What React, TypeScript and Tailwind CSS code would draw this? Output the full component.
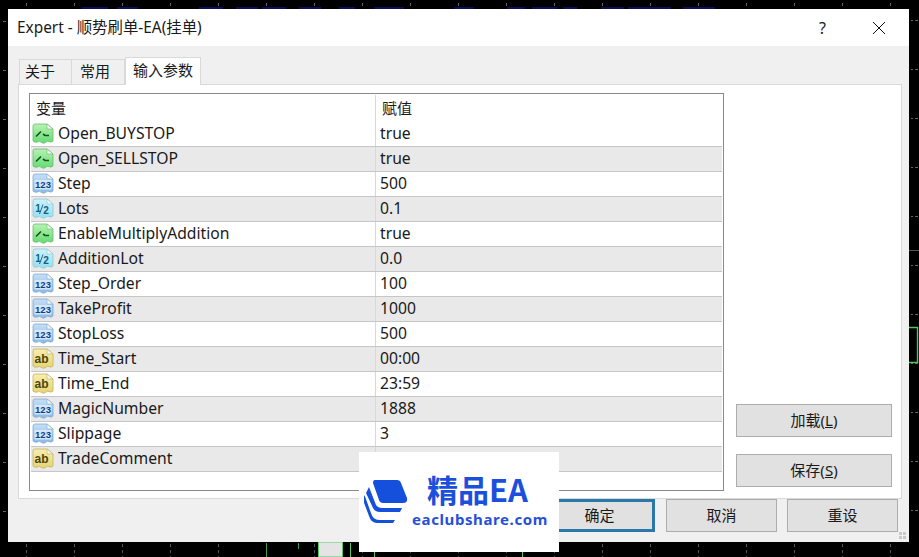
const FONT = "font-['Noto_Sans','Noto_Sans_CJK_SC',sans-serif]";

type Kind = "bool" | "int" | "dbl" | "str";

const params: { name: string; value: string; kind: Kind }[] = [
  { name: "Open_BUYSTOP", value: "true", kind: "bool" },
  { name: "Open_SELLSTOP", value: "true", kind: "bool" },
  { name: "Step", value: "500", kind: "int" },
  { name: "Lots", value: "0.1", kind: "dbl" },
  { name: "EnableMultiplyAddition", value: "true", kind: "bool" },
  { name: "AdditionLot", value: "0.0", kind: "dbl" },
  { name: "Step_Order", value: "100", kind: "int" },
  { name: "TakeProfit", value: "1000", kind: "int" },
  { name: "StopLoss", value: "500", kind: "int" },
  { name: "Time_Start", value: "00:00", kind: "str" },
  { name: "Time_End", value: "23:59", kind: "str" },
  { name: "MagicNumber", value: "1888", kind: "int" },
  { name: "Slippage", value: "3", kind: "int" },
  { name: "TradeComment", value: "", kind: "str" },
];

const iconColors: Record<Kind, { from: string; to: string; edge: string; ink: string }> = {
  bool: { from: "#b8f2b4", to: "#62dc70", edge: "#6dbb72", ink: "#14501e" },
  int: { from: "#c6dff6", to: "#86b8e8", edge: "#86abd2", ink: "#0f3f86" },
  dbl: { from: "#cff2f9", to: "#96dff0", edge: "#8cc6d6", ink: "#0f5f86" },
  str: { from: "#f7eeb2", to: "#e6d470", edge: "#c4b05a", ink: "#4d4510" },
};

function ParamIcon({ kind }: { kind: Kind }) {
  const c = iconColors[kind];
  const id = `grad-${kind}`;
  return (
    <svg width="22" height="22" viewBox="0 0 22 22" className="shrink-0">
      <defs>
        <linearGradient id={id} x1="0" y1="0" x2="0" y2="1">
          <stop offset="0" stopColor={c.from} />
          <stop offset="1" stopColor={c.to} />
        </linearGradient>
      </defs>
      <path
        d="M1 3Q1 1 3 1H15L21 6V18Q19 20 17 18.5Q15 17.5 13.5 19.5Q11.5 21 9.5 19.5Q7.5 17.5 5.5 19Q3 20 1 18Z"
        fill={`url(#${id})`}
        stroke={c.edge}
        strokeWidth="0.8"
      />
      <path d="M15 1V6H21Z" fill="#f4f8f4" stroke={c.edge} strokeWidth="0.6" />
      {kind === "bool" && (
        <g fill="none" stroke={c.ink} strokeWidth="1.6">
          <path d="M4 13.5L9 8.5" />
          <path d="M11 11L13 12.5H17" />
        </g>
      )}
      {kind === "int" && (
        <>
          <rect x="2.5" y="7" width="17" height="9.5" rx="1" fill="#e4f0fb" opacity="0.75" />
          <text x="11" y="15.2" textAnchor="middle" fontSize="9.5" fontWeight="700" fill={c.ink} fontFamily="Liberation Sans, sans-serif">123</text>
        </>
      )}
      {kind === "dbl" && (
        <>
          <text x="6" y="13.5" textAnchor="middle" fontSize="10" fontWeight="700" fill={c.ink} fontFamily="Liberation Sans, sans-serif">1</text>
          <path d="M7.5 16L11 6.5" stroke={c.ink} strokeWidth="0.9" />
          <text x="14" y="16" textAnchor="middle" fontSize="10" fontWeight="700" fill={c.ink} fontFamily="Liberation Sans, sans-serif">2</text>
        </>
      )}
      {kind === "str" && (
        <text x="9.5" y="15" textAnchor="middle" fontSize="12" fontWeight="700" fill={c.ink} fontFamily="Liberation Sans, sans-serif">ab</text>
      )}
    </svg>
  );
}

// the chart behind the dialog
function ChartBackdrop() {
  const ticks = [26, 74, 122, 170, 218, 266, 314, 362, 410, 458, 506, 554, 602, 650, 698, 746, 794, 842, 890];
  const sideTicks = [21, 70, 119, 168, 217, 266, 315, 364, 413, 462, 511];
  const blue = [[82, 26], [117, 21], [199, 24], [236, 22], [262, 24], [299, 22], [339, 16], [374, 30], [454, 20], [507, 18], [532, 25], [563, 14], [601, 23], [628, 43], [683, 32]];
  return (
    <svg width="919" height="557" className="absolute inset-0">
      {blue.map(([x, w]) => (
        <rect key={x} x={x} y="7" width={w} height="2" fill="#0c0c5c" />
      ))}
      {ticks.map((x) => (
        <g key={x}>
          <rect x={x} y="3" width="1" height="3" fill="#666" />
          <line x1={x + 0.5} x2={x + 0.5} y1="544" y2="557" stroke="#555" strokeDasharray="3 3" />
        </g>
      ))}
      {sideTicks.map((y) => (
        <g key={y}>
          <rect x="3" y={y} width="3" height="1" fill="#666" />
          <rect x="911" y={y - 1} width="2" height="1" fill="#666" />
          <rect x="915" y={y - 1} width="3" height="1" fill="#666" />
        </g>
      ))}
      <rect x="266" y="543" width="1" height="14" fill="#4a9a55" />
      <rect x="298" y="543" width="1" height="6" fill="#4a9a55" />
      <rect x="318.5" y="542" width="24" height="15" fill="#e4e4e4" stroke="#59c765" />
      <rect x="350" y="543" width="1" height="14" fill="#59c765" />
      <rect x="374" y="552" width="1" height="5" fill="#59c765" />
      <rect x="522" y="552" width="1" height="5" fill="#59c765" />
      <rect x="909" y="250" width="10" height="1" fill="#555" />
      <path d="M909 327.5H917.5V362.5H909" fill="none" stroke="#4ec956" strokeWidth="1.4" />
    </svg>
  );
}

function Logo() {
  return (
    <div className="absolute left-[359px] top-[452px] w-[200px] h-[100px] bg-white flex items-center overflow-hidden">
      <svg width="44" height="44" viewBox="0 0 44 44" className="ml-[5px] mt-[-3px] shrink-0">
        <path d="M11 1H33Q36 1 37 4L43 19Q44 24 39 24H19Q16 24 15 21L9 4Q9 1 11 1Z" fill="#1450dc" />
        <path d="M5 8L12 26Q14 29 18 29H38L36 33H16Q11 33 9 29L2 14Z" fill="#1450dc" />
        <path d="M0.5 16L7 34Q9 41 15 41H31L29 44H13Q7 44 5 37L-1 21Z" fill="#1450dc" />
      </svg>
      <div className="ml-[4px] flex flex-col items-center gap-[4px] mt-[-6px]">
        <span className="font-['Noto_Sans_CJK_SC',sans-serif] text-[31px] leading-[36px] font-bold text-[#1a50dc] mr-[5px]">精品EA</span>
        <span className="font-['Noto_Sans',sans-serif] text-[15px] leading-[16px] font-bold text-[#2750d8] tracking-[0.6px] whitespace-nowrap">eaclubshare.com</span>
      </div>
    </div>
  );
}

function DialogButton({ label, hotkey, wide, primary }: { label: string; hotkey?: string; wide?: boolean; primary?: boolean }) {
  return (
    <button
      className={`${wide ? "w-[156px]" : "w-[111px]"} h-[33px] bg-[#e1e1e1] text-[15px] text-[#1a1a1a] ${primary ? "border-[3px] border-[#2a79a8]" : "border border-[#adadad]"}`}
    >
      {label}
      {hotkey && (
        <>
          (<span className="underline">{hotkey}</span>)
        </>
      )}
    </button>
  );
}

export default function App() {
  return (
    <div className={`relative w-[919px] h-[557px] bg-black overflow-hidden pt-[9px] pl-[8px] ${FONT}`}>
      <ChartBackdrop />

      <div className="relative w-[901px] h-[533px] bg-[#f0f0f0] flex flex-col text-[#1a1a1a]">
        {/* title bar */}
        <div className="h-[37px] bg-white flex items-center shrink-0 pl-[9px] pr-[23px]">
          <span className="text-[15.4px]">Expert - 顺势刷单-EA(挂单)</span>
          <span className="ml-auto text-[16px] leading-none">?</span>
          <svg width="14" height="14" viewBox="0 0 14 14" className="ml-[46px]">
            <path d="M1 1L13 13M13 1L1 13" stroke="#111" strokeWidth="1" />
          </svg>
        </div>

        {/* tabs */}
        <div className="flex items-end h-[38px] shrink-0 pl-[11px] text-[15px]">
          <div className="w-[53px] h-[25px] bg-[#f0f0f0] border border-b-0 border-[#d9d9d9] flex items-center pl-[5px] pb-[2px]">关于</div>
          <div className="w-[53px] h-[25px] bg-[#f0f0f0] border border-b-0 border-l-0 border-[#d9d9d9] flex items-center pl-[8px] pb-[2px]">常用</div>
          <div className="relative z-10 mb-[-1px] w-[76px] h-[28px] bg-white border border-b-0 border-[#d9d9d9] flex items-center justify-center pb-[2px]">输入参数</div>
        </div>

        {/* panel */}
        <div className="ml-[10px] w-[884px] h-[415px] shrink-0 bg-white border border-[#d9d9d9] flex pl-[10px] pt-[8px]">
          <div className="w-[695px] h-[398px] border border-[#8a8a8a] p-px text-[15.7px] leading-none">
            <div className="h-[27px] flex items-center text-[15px]">
              <div className="w-[344px] pl-[5px]">变量</div>
              <div className="flex-1 h-full border-l border-[#d8d8d8] pl-[6px] flex items-center">赋值</div>
            </div>
            {params.map((p, i) => (
              <div key={p.name} className={`h-[25px] flex items-center border-b border-[#c6c6c6] ${i % 2 ? "bg-[#e9e9e9]" : "bg-white"}`}>
                <div className="w-[344px] flex items-center gap-[4px] pl-px">
                  <ParamIcon kind={p.kind} />
                  <span>{p.name}</span>
                </div>
                <div className="flex-1 h-full border-l border-[#d8d8d8] pl-[4px] flex items-center">{p.value}</div>
              </div>
            ))}
          </div>
          <div className="ml-[12px] flex flex-col justify-end gap-[17px] pb-[11px]">
            <DialogButton label="加载" hotkey="L" wide />
            <DialogButton label="保存" hotkey="S" wide />
          </div>
        </div>

        {/* bottom buttons */}
        <div className="flex justify-end pr-[11px] gap-[11px] shrink-0">
          <DialogButton label="确定" primary />
          <DialogButton label="取消" />
          <div className="ml-[-1px]">
            <DialogButton label="重设" />
          </div>
        </div>

        <svg width="8" height="8" viewBox="0 0 8 8" className="absolute right-[2px] bottom-[2px]">
          <path d="M0 0h3v3H0zM4 0h3v3H4zM0 4h3v3H0zM4 4h3v3H4z" fill="#c9c9c9" />
        </svg>
      </div>

      <Logo />
    </div>
  );
}
